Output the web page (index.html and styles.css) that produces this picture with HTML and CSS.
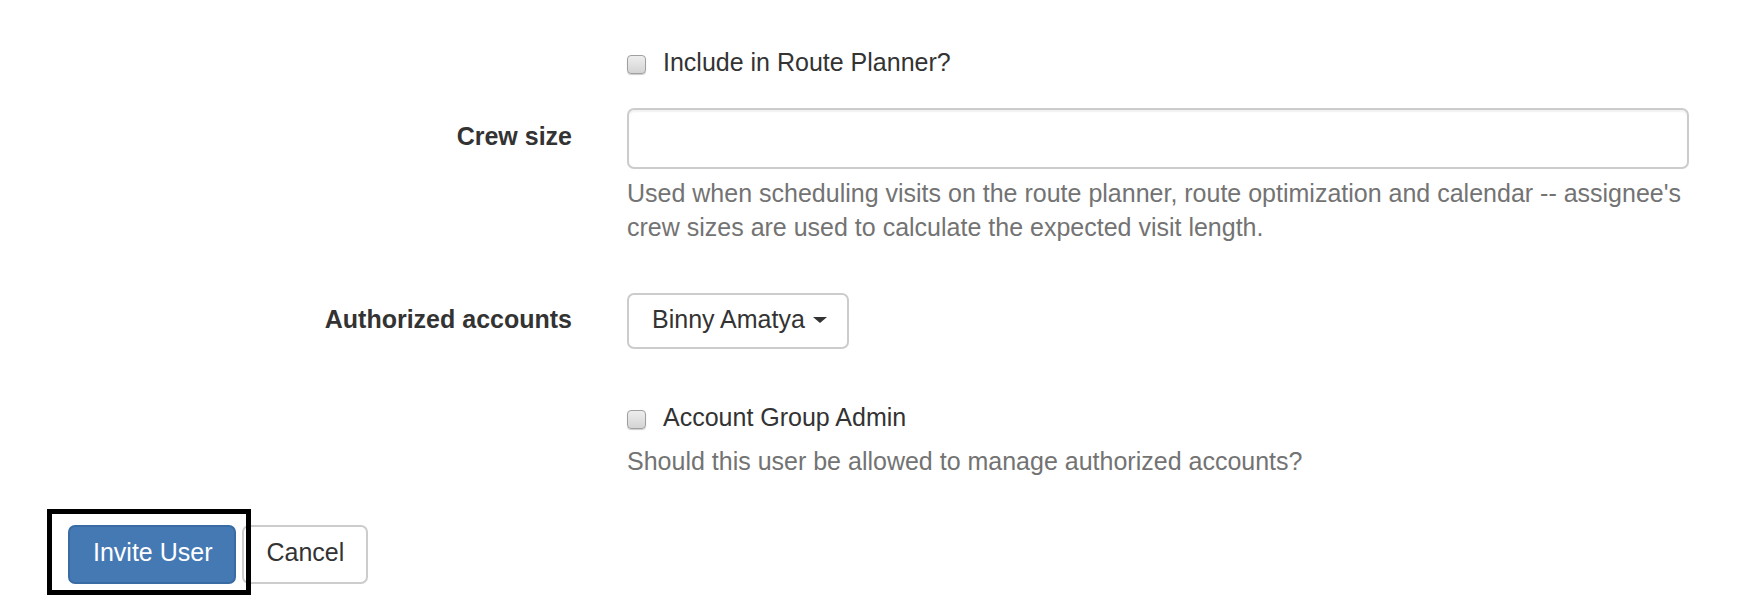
FILE: index.html
```html
<!DOCTYPE html>
<html lang="en">
<head>
<meta charset="utf-8">
<title>Invite User</title>
<link rel="stylesheet" href="styles.css">
</head>
<body>
<form class="form">
  <div class="row row-route">
    <div class="lbl"></div>
    <div class="field">
      <label class="check"><span class="box"></span><span>Include in Route Planner?</span></label>
    </div>
  </div>
  <div class="row row-crew">
    <div class="lbl"><span class="lbl-text lbl-crew">Crew size</span></div>
    <div class="field">
      <div class="input"></div>
      <p class="help help-crew">Used when scheduling visits on the route planner, route optimization and calendar -- assignee's crew sizes are used to calculate the expected visit length.</p>
    </div>
  </div>
  <div class="row row-accounts">
    <div class="lbl"><span class="lbl-text lbl-accounts">Authorized accounts</span></div>
    <div class="field">
      <button type="button" class="dropdown">Binny Amatya<span class="caret"></span></button>
    </div>
  </div>
  <div class="row row-admin">
    <div class="lbl"></div>
    <div class="field">
      <label class="check"><span class="box"></span><span>Account Group Admin</span></label>
      <p class="help help-admin">Should this user be allowed to manage authorized accounts?</p>
    </div>
  </div>
  <div class="actions">
    <div class="focus-wrap">
      <button type="button" class="btn btn-primary">Invite User</button>
      <span class="focus-ring"></span>
    </div>
    <button type="button" class="btn btn-default">Cancel</button>
  </div>
</form>
</body>
</html>
```

FILE: styles.css
```css
html, body {
  margin: 0;
  padding: 0;
  background: #ffffff;
}

body {
  min-height: 598px;
  font-family: "Liberation Sans", Arial, Helvetica, sans-serif;
  font-size: 25px;
  line-height: 34px;
  color: #333333;
}

.form {
  padding-top: 45px;
  padding-bottom: 15px;
}

.row {
  display: flex;
}

.lbl {
  width: 600px;
  box-sizing: border-box;
  padding-right: 28px;
  text-align: right;
  flex: none;
}

.lbl-text {
  display: block;
  font-weight: bold;
  color: #333333;
}

.field {
  width: 1062px;
  margin-left: 27px;
  flex: none;
}

.row-crew {
  margin-top: 29px;
}

.lbl-crew {
  padding-top: 11px;
}

.input {
  height: 61px;
  box-sizing: border-box;
  border: 2px solid #cccccc;
  border-radius: 7px;
  background: #ffffff;
  box-shadow: inset 0 2px 2px rgba(0, 0, 0, 0.06);
}

.help {
  margin: 0;
  color: #737373;
}

.help-crew {
  margin-top: 7px;
}

.help-admin {
  margin-top: 10px;
}

.row-accounts {
  margin-top: 49px;
}

.lbl-accounts {
  padding-top: 9px;
}

.dropdown {
  display: flex;
  align-items: flex-start;
  height: 56px;
  box-sizing: border-box;
  margin: 0;
  padding: 7px 20px 0 23px;
  border: 2px solid #cccccc;
  border-radius: 7px;
  background: #ffffff;
  font-family: inherit;
  font-size: 25px;
  line-height: 34px;
  color: #333333;
  white-space: nowrap;
}

.caret {
  display: block;
  width: 0;
  height: 0;
  margin-left: 8px;
  margin-top: 15px;
  border-top: 6px solid #333333;
  border-left: 7px solid transparent;
  border-right: 7px solid transparent;
}

.row-admin {
  margin-top: 51px;
}

.check {
  display: flex;
  align-items: flex-start;
  font-weight: normal;
  color: #333333;
}

.box {
  display: block;
  flex: none;
  width: 19px;
  height: 19px;
  box-sizing: border-box;
  margin-top: 10px;
  margin-right: 17px;
  border: 1px solid #a0a0a0;
  border-radius: 4px;
  background: linear-gradient(#eeeeee, #d4d4d4);
  box-shadow: 0 1px 1px rgba(0, 0, 0, 0.2);
}

.actions {
  display: flex;
  align-items: flex-start;
  gap: 6px;
  margin-top: 47px;
  padding-left: 68px;
}

.focus-wrap {
  position: relative;
  display: flex;
}

.btn {
  box-sizing: border-box;
  margin: 0;
  padding: 8px 22px 13px 23px;
  border: 2px solid #cccccc;
  border-radius: 7px;
  font-family: inherit;
  font-size: 25px;
  line-height: 34px;
  white-space: nowrap;
}

.btn-primary {
  background: #4579b3;
  border-color: #3a6ca4;
  color: #ffffff;
}

.btn-default {
  padding-left: 22px;
  background: #ffffff;
  color: #333333;
}

.focus-ring {
  position: absolute;
  left: -21px;
  top: -16px;
  width: 204px;
  height: 86px;
  box-sizing: border-box;
  border: 5px solid #000000;
  pointer-events: none;
}
```
